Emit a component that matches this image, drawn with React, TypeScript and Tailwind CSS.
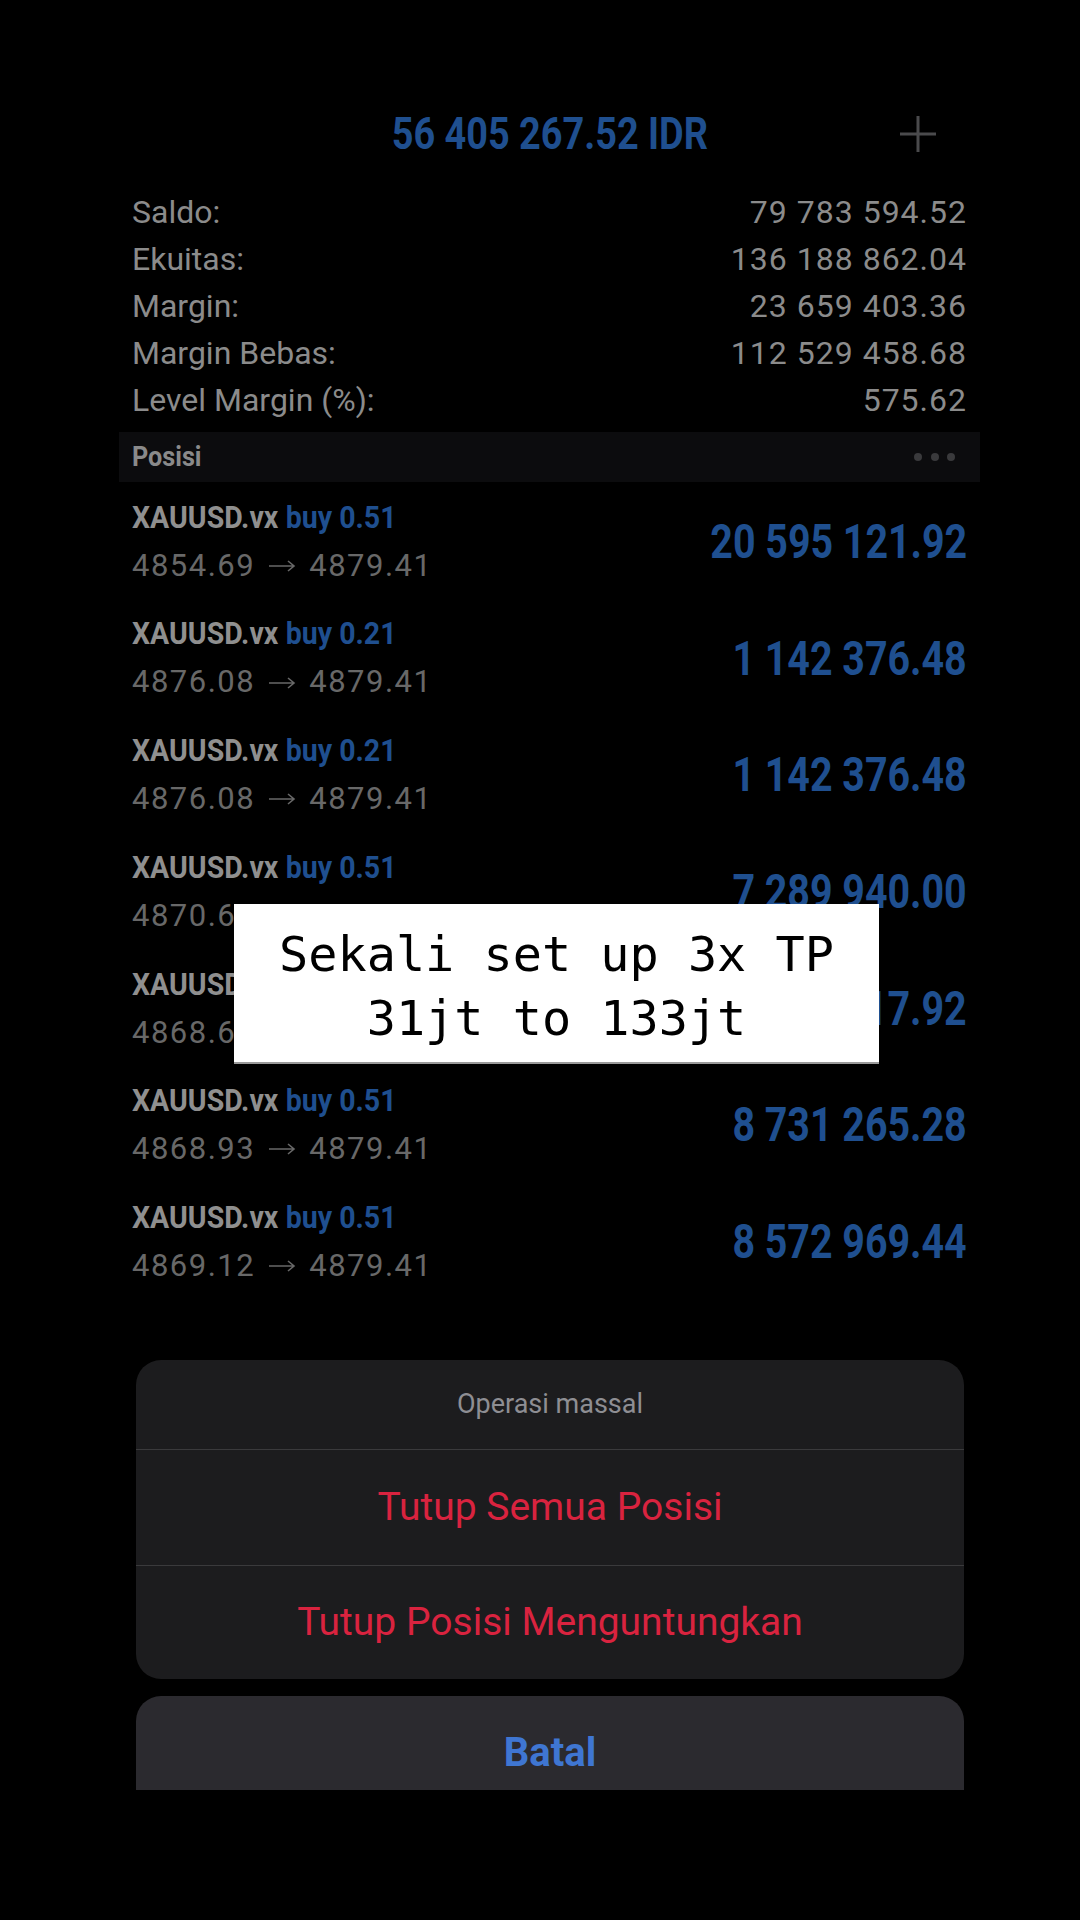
import React from "react";

const rows = [
  { lot: "buy 0.51", from: "4854.69", to: "4879.41", val: "20 595 121.92" },
  { lot: "buy 0.21", from: "4876.08", to: "4879.41", val: "1 142 376.48" },
  { lot: "buy 0.21", from: "4876.08", to: "4879.41", val: "1 142 376.48" },
  { lot: "buy 0.51", from: "4870.61", to: "4879.41", val: "7 289 940.00" },
  { lot: "buy 0.51", from: "4868.67", to: "4879.41", val: "8 813 417.92" },
  { lot: "buy 0.51", from: "4868.93", to: "4879.41", val: "8 731 265.28" },
  { lot: "buy 0.51", from: "4869.12", to: "4879.41", val: "8 572 969.44" },
];

const info = [
  ["Saldo:", "79 783 594.52"],
  ["Ekuitas:", "136 188 862.04"],
  ["Margin:", "23 659 403.36"],
  ["Margin Bebas:", "112 529 458.68"],
  ["Level Margin (%):", "575.62"],
];

function Arrow() {
  return (
    <svg width="28" height="14" viewBox="0 0 28 14" className="mx-[13px]">
      <path d="M1 7H26M20 2L26 7L20 12" stroke="#686868" strokeWidth="1.6" fill="none" />
    </svg>
  );
}

export default function App() {
  return (
    <div className="relative w-[1080px] h-[1920px] bg-black overflow-hidden font-['Roboto',sans-serif]">
      <div className="ml-[119px] w-[861px] pt-[100px]">
        {/* header */}
        <div className="grid grid-cols-[1fr_auto_1fr] items-center h-[68px]">
          <div />
          <div className="inline-block scale-x-[0.86] origin-center font-bold text-[44px] leading-none text-[#1f4f8f]">
            56 405 267.52 IDR
          </div>
          <div className="justify-self-end mr-[43px] flex items-center">
            <svg width="38" height="38" viewBox="0 0 38 38">
              <path d="M19 1V37M1 19H37" stroke="#4a4a4c" strokeWidth="3" />
            </svg>
          </div>
        </div>

        {/* info */}
        <div className="pt-[20px]">
          {info.map(([l, v]) => (
            <div key={l} className="h-[47px] px-[13px] flex items-center justify-between text-[32px] text-[#8b8b8b]">
              <span>{l}</span>
              <span className="tracking-[1px]">{v}</span>
            </div>
          ))}
        </div>

        {/* Posisi bar */}
        <div className="mt-[9px] h-[50px] bg-[#0c0c0e] flex items-center justify-between pl-[13px] pr-[25px]">
          <span className="inline-block scale-x-[0.9] origin-left font-bold text-[28px] text-[#8a8a8a]">
            Posisi
          </span>
          <div className="flex gap-[8.5px]">
            <div className="w-[8px] h-[8px] rounded-full bg-[#3a3a3c]" />
            <div className="w-[8px] h-[8px] rounded-full bg-[#3a3a3c]" />
            <div className="w-[8px] h-[8px] rounded-full bg-[#3a3a3c]" />
          </div>
        </div>

        {/* positions */}
        <div className="pt-[12px] flex flex-col gap-[20.7px]">
          {rows.map((r, i) => (
            <div key={i} className="h-[96px] px-[13px] flex items-center justify-between">
              <div className="flex flex-col">
                <div className="h-[48px] flex items-center">
                  <div className="inline-block whitespace-nowrap scale-x-[0.92] origin-left font-bold text-[31px]">
                    <span className="text-[#8f8f8f]">XAUUSD.vx</span>
                    <span className="text-[#1f4f8f] ml-[8px]">{r.lot}</span>
                  </div>
                </div>
                <div className="h-[48px] flex items-center text-[31px] text-[#686868] tracking-[1.5px]">
                  <span>{r.from}</span>
                  <Arrow />
                  <span>{r.to}</span>
                </div>
              </div>
              <div className="inline-block whitespace-nowrap scale-x-[0.82] origin-right font-bold text-[48px] leading-none text-[#1f4f8f]">
                {r.val}
              </div>
            </div>
          ))}
        </div>
      </div>

      {/* action sheet */}
      <div className="ml-[136px] w-[828px] mt-[70px]">
        <div className="rounded-[25px] bg-[#1c1c1e] overflow-hidden">
          <div className="h-[89px] flex items-center justify-center text-[27px] text-[#8e8e93]">
            Operasi massal
          </div>
          <div className="h-[1px] bg-[#3a3a3c]" />
          <div className="h-[115px] flex items-center justify-center text-[39px] text-[#d9233f]">
            Tutup Semua Posisi
          </div>
          <div className="h-[1px] bg-[#3a3a3c]" />
          <div className="h-[113px] flex items-center justify-center text-[39px] text-[#d9233f]">
            Tutup Posisi Menguntungkan
          </div>
        </div>
        <div className="mt-[17px] h-[94px] rounded-t-[25px] bg-[#2b2a2f] flex items-start justify-center pt-[33px]">
          <span className="text-[40px] leading-[48px] font-bold text-[#3f76d2]">Batal</span>
        </div>
      </div>

      {/* caption overlay */}
      <div className="absolute left-[234px] top-[904px] w-[645px] h-[160px] bg-white border-b-[2px] border-[#9a9a9a] flex flex-col items-center justify-center pt-[6px] font-['DejaVu_Sans_Mono',monospace] text-[48.5px] leading-[64px] text-black">
        <div>Sekali set up 3x TP</div>
        <div>31jt to 133jt</div>
      </div>
    </div>
  );
}
